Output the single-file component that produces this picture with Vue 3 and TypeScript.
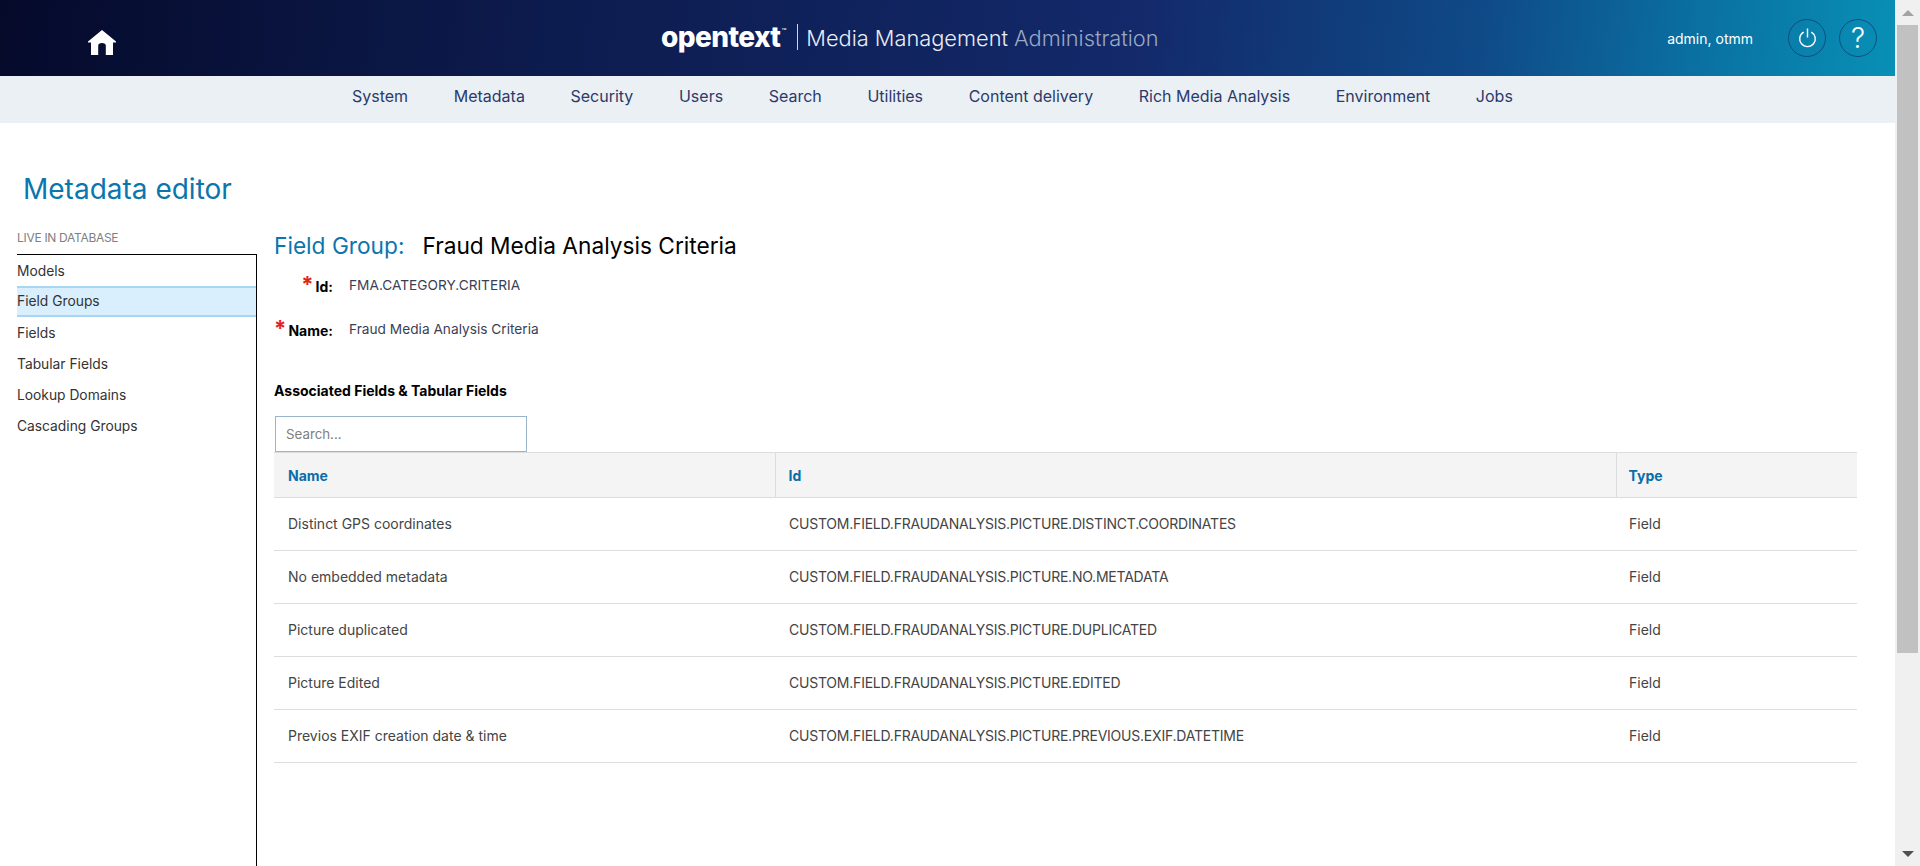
<script setup lang="ts">
interface Row { name: string; id: string; type: string }
const navItems: string[] = ['System', 'Metadata', 'Security', 'Users', 'Search', 'Utilities', 'Content delivery', 'Rich Media Analysis', 'Environment', 'Jobs']
const sideItems: string[] = ['Models', 'Field Groups', 'Fields', 'Tabular Fields', 'Lookup Domains', 'Cascading Groups']
const rows: Row[] = [
  { name: 'Distinct GPS coordinates', id: 'CUSTOM.FIELD.FRAUDANALYSIS.PICTURE.DISTINCT.COORDINATES', type: 'Field' },
  { name: 'No embedded metadata', id: 'CUSTOM.FIELD.FRAUDANALYSIS.PICTURE.NO.METADATA', type: 'Field' },
  { name: 'Picture duplicated', id: 'CUSTOM.FIELD.FRAUDANALYSIS.PICTURE.DUPLICATED', type: 'Field' },
  { name: 'Picture Edited', id: 'CUSTOM.FIELD.FRAUDANALYSIS.PICTURE.EDITED', type: 'Field' },
  { name: 'Previos EXIF creation date & time', id: 'CUSTOM.FIELD.FRAUDANALYSIS.PICTURE.PREVIOUS.EXIF.DATETIME', type: 'Field' },
]
</script>

<template>
  <div class="shell">
    <div class="page">
      <header class="top">
        <div class="home">
          <svg width="28" height="25" viewBox="0 0 28 25">
            <path d="M14 0 L28 11.5 L28 12.5 L25 12.5 L25 25 L17.8 25 L17.8 15.5 Q17.8 13 14 13 Q10.2 13 10.2 15.5 L10.2 25 L3 25 L3 12.5 L0 12.5 L0 11.5 Z" fill="#fff" />
          </svg>
        </div>
        <div class="brand">
          <span class="logo">opentext</span><span class="tm">™</span><span class="bar"></span>
          <span class="product">Media Management</span>
          <span class="admin">Administration</span>
        </div>
        <div class="account">
          <span class="user">admin, otmm</span>
          <span class="circle">
            <svg width="19" height="20" viewBox="0 0 20 21" fill="none" stroke="#fff" stroke-width="1.5">
              <path d="M6 4.2 A8.2 8.2 0 1 0 14 4.2" />
              <path d="M10 0.5 V10" />
            </svg>
          </span>
          <span class="circle help">?</span>
        </div>
      </header>
      <nav class="nav">
        <a v-for="item in navItems" :key="item">{{ item }}</a>
      </nav>
      <h1 class="title">Metadata editor</h1>
      <div class="body">
        <aside class="side">
          <div class="side-label">LIVE IN DATABASE</div>
          <ul class="side-list">
            <li v-for="item in sideItems" :key="item" :class="{ active: item === 'Field Groups' }">{{ item }}</li>
          </ul>
        </aside>
        <main class="main">
          <h2 class="heading"><span class="heading-key">Field Group:</span><span class="heading-val">Fraud Media Analysis Criteria</span></h2>
          <div class="form-row first">
            <div class="label"><span class="req">*</span><b>Id:</b></div>
            <div class="value">FMA.CATEGORY.CRITERIA</div>
          </div>
          <div class="form-row second">
            <div class="label"><span class="req">*</span><b>Name:</b></div>
            <div class="value">Fraud Media Analysis Criteria</div>
          </div>
          <h3 class="assoc">Associated Fields &amp; Tabular Fields</h3>
          <input class="search" type="text" placeholder="Search..." />
          <table class="grid">
            <colgroup>
              <col class="c1" />
              <col class="c2" />
              <col />
            </colgroup>
            <thead>
              <tr><th>Name</th><th>Id</th><th>Type</th></tr>
            </thead>
            <tbody>
              <tr v-for="row in rows" :key="row.id">
                <td>{{ row.name }}</td>
                <td class="id-cell">{{ row.id }}</td>
                <td>{{ row.type }}</td>
              </tr>
            </tbody>
          </table>
        </main>
      </div>
    </div>
    <div class="scrollbar">
      <span class="arrow up"></span>
      <span class="thumb"></span>
      <span class="arrow down"></span>
    </div>
  </div>
</template>

<style>
html, body { margin: 0; height: 100%; overflow: hidden; background: #fff; }
</style>

<style scoped>
* { box-sizing: border-box; }
.shell { display: flex; height: 866px; overflow: hidden; font-family: Inter, "Liberation Sans", sans-serif; color: #333; }
.page { flex: 1; min-width: 0; }
.top {
  height: 76px; display: flex; align-items: center; position: relative;
  background: linear-gradient(97deg, #050a2b 0%, #0d1c4f 30%, #13296a 60%, #0f4a87 78%, #0a72a3 90%, #0890b6 100%);
}
.home { margin-left: 88px; display: flex; margin-top: 9px; }
.brand { position: absolute; left: 661px; top: 0; height: 76px; display: flex; align-items: center; color: #fff; font-size: 21.8px; white-space: nowrap; }
.logo { font-weight: 800; font-size: 28px; letter-spacing: -0.6px; margin-top: -2px; }
.tm { font-size: 8px; margin: -14px 0 0 1px; }
.bar { width: 1px; height: 26px; background: #cfd6e6; margin: -2px 8px 0 11px; }
.product { color: #e9edf4; font-weight: 300; }
.admin { color: #9aa8c4; font-weight: 300; margin-left: 6px; }
.account { margin-left: auto; display: flex; align-items: center; padding-right: 18px; }
.user { color: #fff; font-size: 14px; margin-right: 35px; }
.circle { width: 38px; height: 38px; border: 1px solid #0e4e80; border-radius: 50%; display: flex; align-items: center; justify-content: center; color: #fff; }
.help { margin-left: 13px; font-size: 28px; font-weight: 300; }
.nav { height: 47px; background: #ebf0f4; display: flex; align-items: center; gap: 45.6px; padding: 0 0 7px 352px; }
.nav a { color: #2b3a6b; font-size: 16px; white-space: nowrap; }
.title { margin: 0; height: 108px; padding: 49px 0 0 23px; font-size: 28px; line-height: 34px; font-weight: 400; color: #0a76ad; }
.body { display: flex; padding-left: 17px; }
.side { width: 240px; flex: none; }
.side-label { height: 23px; color: #808080; font-size: 12px; line-height: 14px; letter-spacing: -0.3px; }
.side-list { list-style: none; margin: 0; padding: 0; border-top: 1px solid #000; border-right: 1px solid #000; height: 612px; }
.side-list li { height: 31px; line-height: 33px; font-size: 13.8px; color: #333; }
.side-list li.active { background: #d9effe; border-top: 2px solid #a8d5f0; border-bottom: 2px solid #a8d5f0; line-height: 26px; }
.main { flex: 1; min-width: 0; padding: 0 38px 0 17px; }
.heading { margin: -1px 0 0; height: 36px; font-size: 22.7px; line-height: 32px; font-weight: 400; white-space: nowrap; }
.heading-key { color: #0a76ad; margin-right: 18px; }
.heading-val { color: #000; }
.form-row { display: flex; align-items: center; height: 24px; }
.form-row.first { margin-top: 7px; }
.form-row.second { margin-top: 20px; }
.label { width: 59px; flex: none; display: flex; justify-content: flex-end; align-items: center; color: #000; font-size: 14px; }
.label b { font-weight: 700; margin-top: 2px; }
.req { color: #e2231a; font-size: 22px; line-height: 14px; margin-right: 2px; height: 14px; margin-top: -2px; font-weight: 700; }
.value { margin-left: 16px; font-size: 13.7px; color: #3a3f55; }
.assoc { margin: 42px 0 0; height: 33px; font-size: 14px; line-height: 16px; font-weight: 700; color: #000; }
.search { display: block; width: 252px; height: 36px; margin-left: 1px; padding: 0 10px; border: 1px solid #9ab5c9; font: 13.3px Inter, sans-serif; outline: none; color: #333; }
.search::placeholder { color: #808080; opacity: 1; }
.grid { width: 1583px; border-collapse: collapse; table-layout: fixed; margin-top: 0; font-size: 14px; }
.c1 { width: 501px; }
.c2 { width: 841px; }
.grid th { height: 45px; background: #f4f4f4; border-top: 1px solid #ddd; border-bottom: 1px solid #ddd; text-align: left; padding: 0 13px; color: #0a6da8; font-weight: 700; font-size: 14px; }
.grid th:first-child { padding-left: 14px; }
.grid th:last-child { padding-left: 12px; }
.grid th + th { border-left: 1px solid #ddd; }
.grid td { height: 53px; padding: 0 13px 1px 14px; border-bottom: 1px solid #ddd; color: #444; white-space: nowrap; }
.grid td:last-child { padding-left: 13px; }
.grid td.id-cell { letter-spacing: -0.22px; }
.scrollbar { width: 25px; flex: none; background: #f0f0f0; position: relative; display: flex; flex-direction: column; align-items: center; }
.thumb { width: 21px; height: 628px; background: #c1c1c1; margin-top: 9px; }
.arrow { width: 0; height: 0; border-left: 6px solid transparent; border-right: 6px solid transparent; }
.arrow.up { border-bottom: 6px solid #a3a3a3; margin-top: 10px; }
.arrow.down { border-top: 6px solid #505050; margin-top: auto; margin-bottom: 9px; }
</style>
